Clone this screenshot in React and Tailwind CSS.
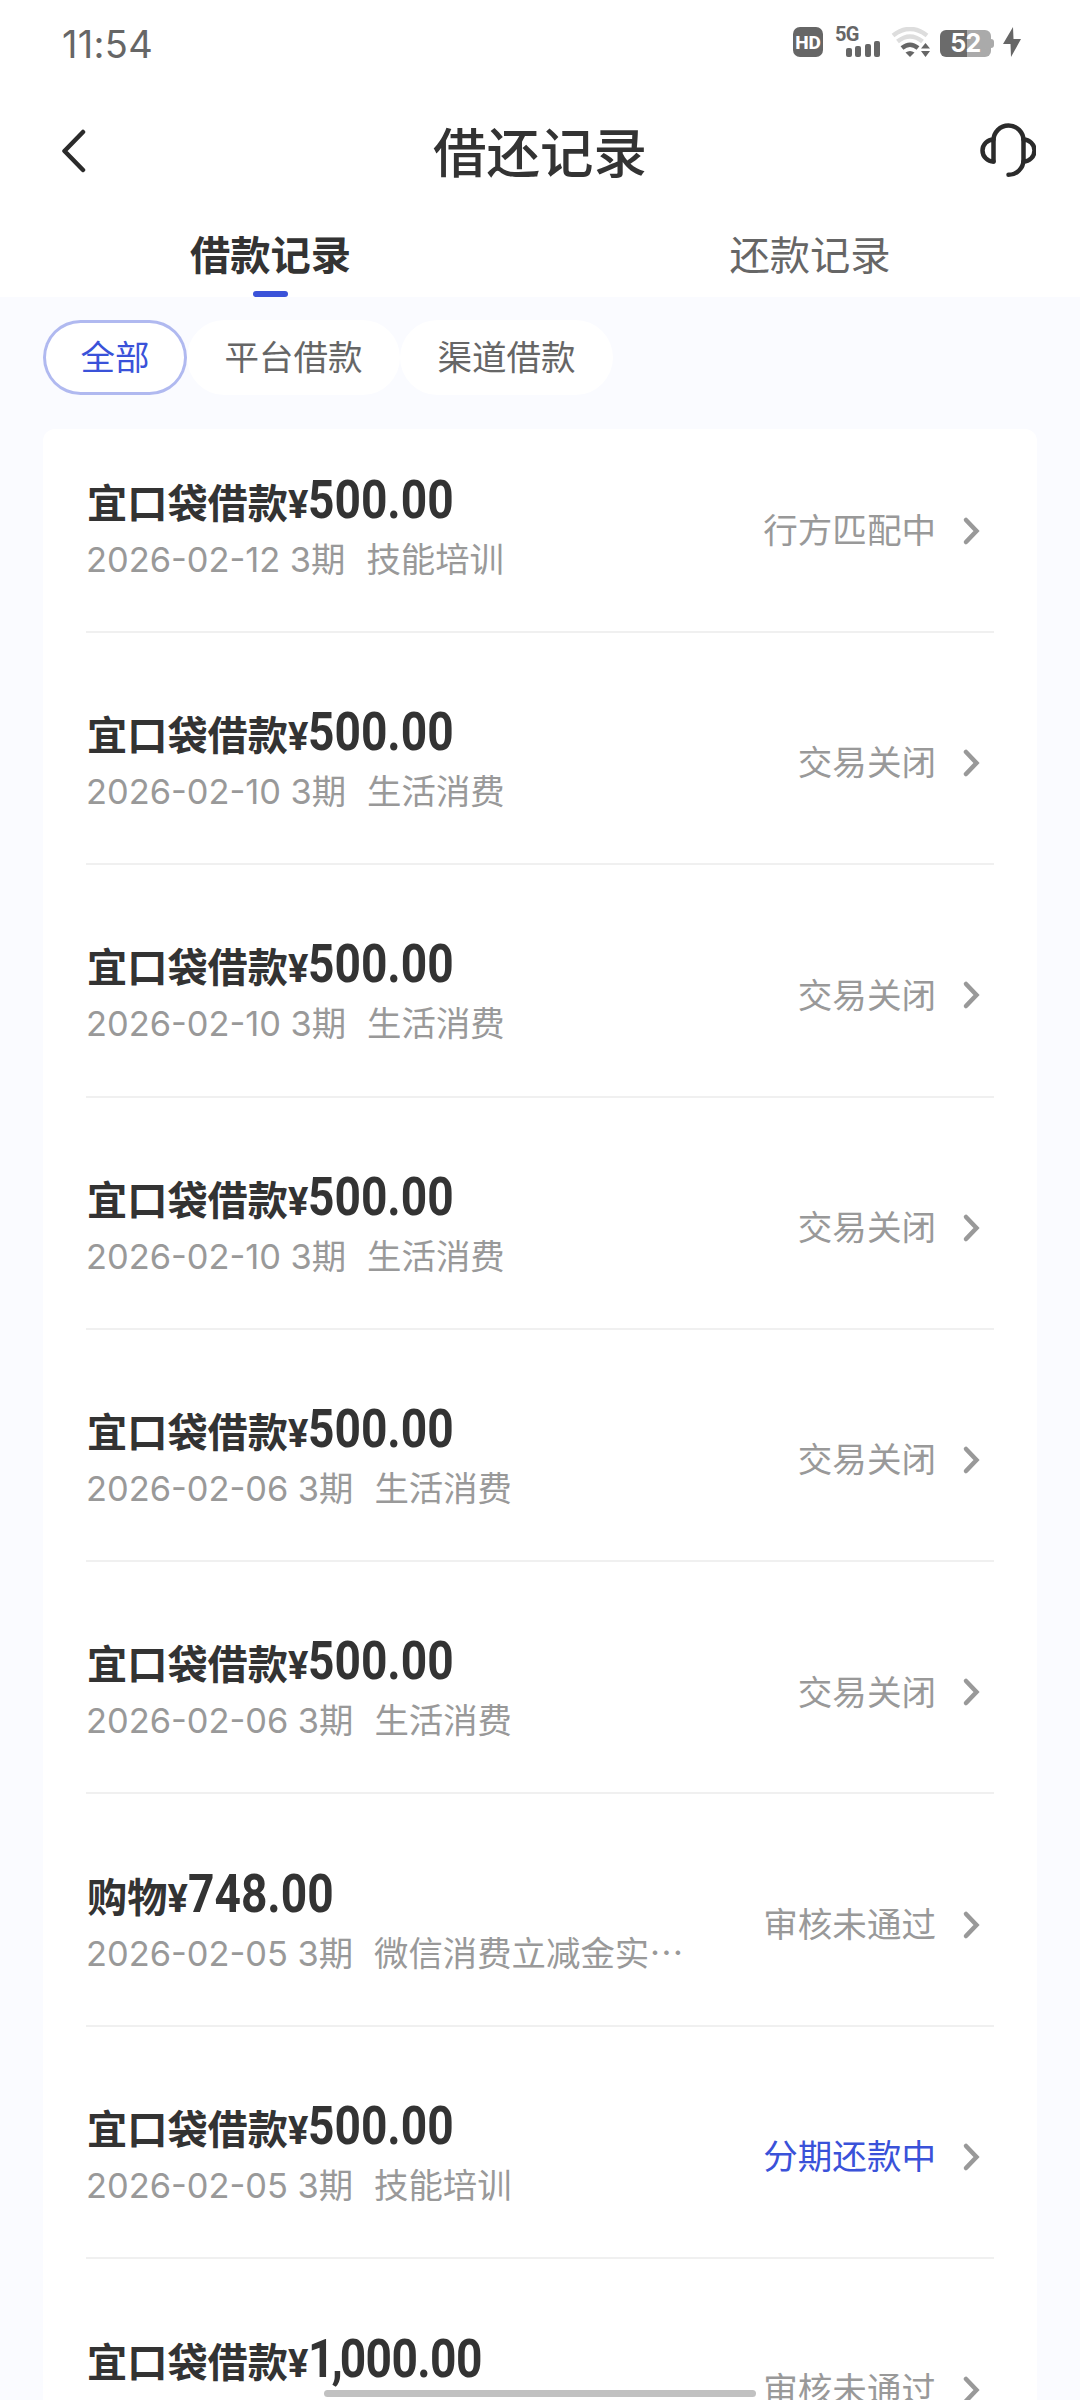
import clsx from 'clsx'

const tabs = ['借款记录', '还款记录']
const filters = ['全部', '平台借款', '渠道借款']

const records = [
  { title: '宜口袋借款', amount: '500.00', date: '2026-02-12', usage: '技能培训', status: '行方匹配中' },
  { title: '宜口袋借款', amount: '500.00', date: '2026-02-10', usage: '生活消费', status: '交易关闭' },
  { title: '宜口袋借款', amount: '500.00', date: '2026-02-10', usage: '生活消费', status: '交易关闭' },
  { title: '宜口袋借款', amount: '500.00', date: '2026-02-10', usage: '生活消费', status: '交易关闭' },
  { title: '宜口袋借款', amount: '500.00', date: '2026-02-06', usage: '生活消费', status: '交易关闭' },
  { title: '宜口袋借款', amount: '500.00', date: '2026-02-06', usage: '生活消费', status: '交易关闭' },
  { title: '购物', amount: '748.00', date: '2026-02-05', usage: '微信消费立减金实…', status: '审核未通过' },
  { title: '宜口袋借款', amount: '500.00', date: '2026-02-05', usage: '技能培训', status: '分期还款中', active: true },
  { title: '宜口袋借款', amount: '1,000.00', status: '审核未通过' },
]

function StatusBar() {
  return (
    <div className="flex h-[84px] items-center justify-between pl-[62px] pr-[59px] text-[#666]">
      <span className="text-[38px] leading-none tracking-[0.3px] mt-[4px] font-['Inter',sans-serif]">11:54</span>
      <div className="flex items-center">
        <div className="flex h-[30px] w-[30px] items-center justify-center rounded-[7px] bg-[#666] text-[19px] font-extrabold leading-none text-white font-['Roboto',sans-serif]">HD</div>
        <div className="ml-[12px] h-[30px] w-[45px]">
          <div className="h-[14px] text-[20px] font-bold leading-[15px] tracking-[-0.8px] font-['Roboto',sans-serif]">5G</div>
          <div className="flex h-[16px] items-end justify-end gap-[3.5px]">
            <i className="h-[9px] w-[6px] rounded-[2px] bg-[#666]" />
            <i className="h-[11px] w-[6px] rounded-[2px] bg-[#666]" />
            <i className="h-[13px] w-[6px] rounded-[2px] bg-[#666]" />
            <i className="h-[16px] w-[6px] rounded-[2px] bg-[#666]" />
          </div>
        </div>
        <svg className="ml-[11px]" width="40" height="30" viewBox="0 0 40 30" fill="none">
          <path d="M2 8.5Q19 -4.5 36 8.5" stroke="#ddd" strokeWidth="4.5" />
          <path d="M6.5 14.5Q19 4.5 31.5 14.5" stroke="#ddd" strokeWidth="4.5" />
          <path d="M11 21Q19 14.5 27 21" stroke="#666" strokeWidth="4.5" />
          <path d="M14.5 25.5Q19 22.5 23.5 25.5L19 30Z" fill="#666" />
          <path d="M30 21.5L34.5 16L39 21.5ZM30 24H39L34.5 30Z" fill="#666" />
        </svg>
        <div className="ml-[9px] flex items-center mt-[3px]">
          <div className="flex h-[27px] w-[51px] items-center justify-center rounded-[6px] bg-linear-to-r from-[#6b6b6b] from-53% to-[#aaa] to-53% text-[25px] font-bold leading-none tracking-[-0.5px] text-white font-['Inter',sans-serif]">52</div>
          <i className="h-[9px] w-[3px] rounded-r-[3px] bg-[#aaa]" />
        </div>
        <svg className="ml-[9px]" width="18" height="30" viewBox="0 0 18 30" fill="#666">
          <path d="M10 0L0 17H7.5L8 30L18 12H10.5Z" />
        </svg>
      </div>
    </div>
  )
}

function Header() {
  return (
    <div className="grid h-[134px] grid-cols-3 items-center px-[44px]">
      <svg className="ml-[16px]" width="28" height="44" viewBox="0 0 28 44" fill="none" stroke="#2b2b2b" strokeWidth="4.5" strokeLinecap="round" strokeLinejoin="round">
        <path d="M23 3L4.5 22L23 41" />
      </svg>
      <h1 className="-mt-[3px] whitespace-nowrap text-center text-[53.5px] font-medium leading-none text-[#333]">借还记录</h1>
      <svg className="justify-self-end" width="56" height="56" viewBox="0 0 56 56" fill="none" stroke="#2b2b2b" strokeWidth="4.5" strokeLinecap="round" strokeLinejoin="round">
        <path d="M13.5 38.5V17.5a15 15 0 0 1 30 0V37a15 15 0 0 1 -15 14.8" />
        <path d="M13.5 16.5a11 11 0 0 0 0 22M43.5 16.5a11 11 0 0 1 0 22" />
      </svg>
    </div>
  )
}

function Amount({ value }) {
  const [head, rest] = value.split(',')
  return (
    <span className="origin-left scale-x-[0.87] text-[53px] leading-[62px] font-['Roboto',sans-serif]">
      {rest ? <><span className="tracking-[-3.5px]">{head},</span><span className="tracking-[-0.7px]">{rest}</span></> : head}
    </span>
  )
}

function Record({ item, last }) {
  return (
    <div className={clsx('flex h-[232.3px] items-center justify-between pt-[27px] first:h-[204px] first:pt-0 first:pb-[2px]', !last && 'border-b-2 border-[#f0f0f0]')}>
      <div className="h-[121px] whitespace-nowrap">
        <div className="flex h-[62px] items-baseline font-bold text-[#333]">
          <span className="pl-px text-[40.2px] leading-[62px]">{item.title}</span>
          <span className="text-[38px] font-['Roboto',sans-serif]">¥</span>
          <Amount value={item.amount} />
        </div>
        {item.date && (
          <div className="flex h-[52px] items-baseline text-[34.4px] leading-[52px] text-[#999]">
            <span className="mr-[9.5px] font-['Inter',sans-serif]">{item.date}</span>
            <span className="font-['Inter','Noto_Sans_CJK_SC',sans-serif]">3期</span>
            <span className="ml-[21px]">{item.usage}</span>
          </div>
        )}
      </div>
      <div className="flex items-center pr-[14px]">
        <span className={clsx('-mt-[2px] text-[34.56px] leading-none', item.active ? 'text-[#3a52d9]' : 'text-[#999]')}>{item.status}</span>
        <svg className="ml-[26px] mt-[3px]" width="18" height="30" viewBox="0 0 18 30" fill="none" stroke="#999" strokeWidth="4.5" strokeLinecap="round">
          <path d="M4 4L14.5 15L4 26" />
        </svg>
      </div>
    </div>
  )
}

export default function App() {
  return (
    <div className="relative flex h-[2400px] w-[1080px] flex-col overflow-hidden bg-[#fafbff] font-['Noto_Sans_CJK_SC',sans-serif]">
      <div className="shrink-0 bg-white">
        <StatusBar />
        <Header />
        <div className="grid h-[79px] grid-cols-2">
          {tabs.map((tab, i) => (
            <div key={tab} className="flex flex-col items-center">
              <span className={clsx('mt-[5px] text-[40.3px] leading-[60px]', i === 0 ? 'pl-px font-bold text-[#333]' : 'text-[#666]')}>{tab}</span>
              {i === 0 && <i className="mt-[8px] h-[6px] w-[35px] rounded-full bg-[#3a52d9]" />}
            </div>
          ))}
        </div>
      </div>
      <div className="mt-[23px] flex shrink-0 pl-[43.2px]">
        {filters.map((name, i) => (
          <button key={name} className={clsx('h-[75px] rounded-full bg-white px-[37.4px] pb-[5px] text-[34.56px] leading-none', i === 0 ? 'text-[#3a52d9] ring-3 ring-inset ring-[#b0b9f0]' : 'text-[#666]')}>{name}</button>
        ))}
      </div>
      <div className="mx-[43px] mt-[34px] grow rounded-t-[12px] bg-white px-[43px]">
        {records.map((item, i) => <Record key={i} item={item} last={i === records.length - 1} />)}
      </div>
      <div className="absolute bottom-[3px] left-[324px] h-[7px] w-[432px] rounded-full bg-[#c1c1c1]" />
    </div>
  )
}
